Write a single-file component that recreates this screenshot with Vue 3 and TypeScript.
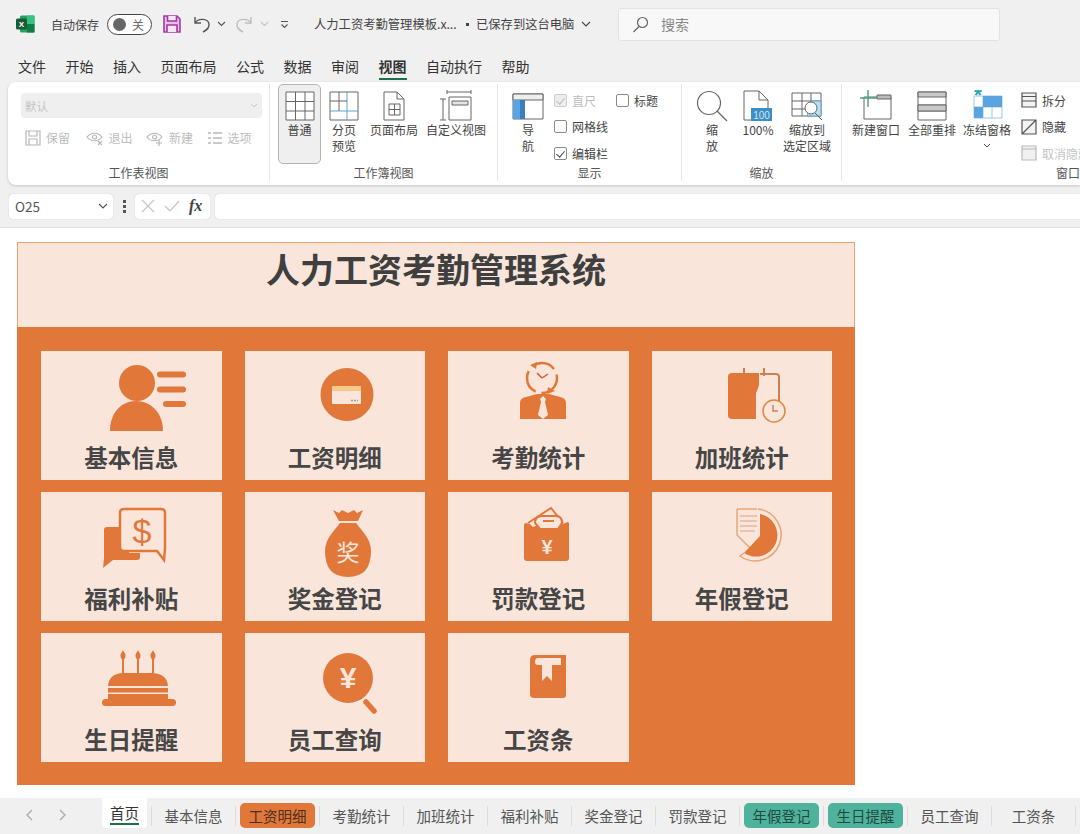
<script setup lang="ts">
const menus = ['文件', '开始', '插入', '页面布局', '公式', '数据', '审阅', '视图', '自动执行', '帮助']

const cards = [
  { name: '基本信息', icon: 'person' },
  { name: '工资明细', icon: 'card' },
  { name: '考勤统计', icon: 'clock' },
  { name: '加班统计', icon: 'calendar' },
  { name: '福利补贴', icon: 'chat' },
  { name: '奖金登记', icon: 'bag' },
  { name: '罚款登记', icon: 'wallet' },
  { name: '年假登记', icon: 'pie' },
  { name: '生日提醒', icon: 'cake' },
  { name: '员工查询', icon: 'search' },
  { name: '工资条', icon: 'book' },
]

const sheets = [
  { name: '基本信息' },
  { name: '工资明细', tone: 'orange' },
  { name: '考勤统计' },
  { name: '加班统计' },
  { name: '福利补贴' },
  { name: '奖金登记' },
  { name: '罚款登记' },
  { name: '年假登记', tone: 'green' },
  { name: '生日提醒', tone: 'green' },
  { name: '员工查询' },
  { name: '工资条' },
]
</script>

<template>
  <div class="app">
    <header class="titlebar">
      <svg class="logo" width="19" height="18" viewBox="0 0 19 18">
        <rect x="4" y="0.5" width="14.5" height="17" rx="1.5" fill="#21a366" />
        <rect x="11" y="0.5" width="7.5" height="8.5" fill="#33c481" />
        <rect x="11" y="9" width="7.5" height="8.5" fill="#107c41" />
        <rect x="0" y="3.5" width="11" height="11" rx="1.5" fill="#185c37" />
        <text x="5.5" y="12" class="logo-x">X</text>
      </svg>
      <span class="autosave">自动保存</span>
      <span class="toggle"><i></i>关</span>
      <svg class="save" width="18" height="18" viewBox="0 0 18 18" fill="none" stroke="#a33aa3" stroke-width="1.6">
        <path d="M1 1h13l3 3v13H1z" fill="#e6bfe6" />
        <path d="M4.500 1v5h9V1M4 17v-7h10v7" fill="#f4e6f4" />
      </svg>
      <svg class="undo" width="18" height="18" viewBox="0 0 18 18" fill="none" stroke="#555" stroke-width="1.4">
        <path d="M2 2v6h6M2 8c3-5 13-5 14 1 .5 3-2 6-6 8" />
      </svg>
      <svg class="chev" width="9" height="6" viewBox="0 0 9 6" fill="none" stroke="#555" stroke-width="1.2"><path d="M1 1l3.500 3.500L8 1" /></svg>
      <svg class="redo" width="18" height="18" viewBox="0 0 18 18" fill="none" stroke="#bdbdbd" stroke-width="1.4">
        <path d="M16 2v6h-6M16 8c-3-5-13-5-14 1-.5 3 2 6 6 8" />
      </svg>
      <svg class="chev2" width="9" height="6" viewBox="0 0 9 6" fill="none" stroke="#c4c4c4" stroke-width="1.2"><path d="M1 1l3.500 3.500L8 1" /></svg>
      <svg class="custom" width="9" height="9" viewBox="0 0 9 9" fill="none" stroke="#555" stroke-width="1.1"><path d="M1 1.500h7M1.500 4.500l3 3 3-3" /></svg>
      <span class="filename">人力工资考勤管理模板.x...</span>
      <span class="dot"></span>
      <span class="filename">已保存到这台电脑</span>
      <svg class="chev3" width="10" height="6" viewBox="0 0 10 6" fill="none" stroke="#444" stroke-width="1.1"><path d="M1 1l4 4 4-4" /></svg>
      <div class="searchbox">
        <svg width="17" height="17" viewBox="0 0 17 17" fill="none" stroke="#666" stroke-width="1.2">
          <circle cx="10.500" cy="6.500" r="5" /><path d="M7 10.500L1.500 16" />
        </svg>
        <span>搜索</span>
      </div>
    </header>

    <nav class="menubar">
      <span v-for="m in menus" :key="m" class="menu" :class="{ active: m === '视图' }">{{ m }}</span>
    </nav>

    <section class="ribbon">
      <div class="group g1">
        <div class="body">
          <div class="select"><span>默认</span>
            <svg width="8" height="5" viewBox="0 0 8 5" fill="none" stroke="#c8c8c8"><path d="M1 1l3 3 3-3" /></svg>
          </div>
          <div class="view-row">
            <span class="view-item">
              <svg width="16" height="16" viewBox="0 0 16 16" fill="none" stroke="#b8b8b8" stroke-width="1.2"><path d="M1 1h14v14H1zM4 1v5h8V1M4 15V9h8v6" /></svg>保留
            </span>
            <span class="view-item">
              <svg width="18" height="16" viewBox="0 0 18 16" fill="none" stroke="#b8b8b8" stroke-width="1.2"><path d="M1 7c4-5 11-5 15 0-4 5-11 5-15 0z" /><circle cx="8.500" cy="7" r="2" /><path d="M12 11l4 4M16 11l-4 4" /></svg>退出
            </span>
            <span class="view-item">
              <svg width="18" height="16" viewBox="0 0 18 16" fill="none" stroke="#b8b8b8" stroke-width="1.2"><path d="M1 7c4-5 11-5 15 0-4 5-11 5-15 0z" /><circle cx="8.500" cy="7" r="2" /><path d="M13 10v6M10 13h6" /></svg>新建
            </span>
            <span class="view-item">
              <svg width="16" height="16" viewBox="0 0 16 16" fill="none" stroke="#b8b8b8" stroke-width="1.4"><path d="M1 3h3M1 8h3M1 13h3M6 3h9M6 8h9M6 13h9" /></svg>选项
            </span>
          </div>
        </div>
        <div class="group-label">工作表视图</div>
      </div>

      <div class="group g2">
        <div class="body row">
          <div class="big selected w43">
            <svg width="32" height="32" viewBox="0 0 32 32" fill="#fff" stroke="#666"><path d="M2 2h28v28H2zM2 11.500h28M2 21h28M11.500 2v28M21 2v28" /></svg>
            <span>普通</span>
          </div>
          <div class="big w40">
            <svg width="32" height="32" viewBox="0 0 32 32" fill="#fff" stroke="#666"><path d="M2 2h28v28H2z" /><path d="M2 21h28M19 2v28" stroke="#5aa9c9" /><path d="M2 11h17M11 2v19" /></svg>
            <span>分页<br />预览</span>
          </div>
          <div class="big w60">
            <svg width="32" height="32" viewBox="0 0 32 32" fill="#fff" stroke="#666"><path d="M6 2h13l7 7v21H6zM19 2v7h7" /><path d="M11 14h11v11H11zM11 19.500h11M16.500 14v11" /></svg>
            <span>页面布局</span>
          </div>
          <div class="big w64">
            <svg width="34" height="32" viewBox="0 0 34 32" fill="#fff" stroke="#666"><path d="M8 2h24M8 0v4M32 0v4M1 9h6M1 30h6M4 9v21" fill="none" /><path d="M10 7h22v23H10z" /><path d="M13 11h16v4H13z" fill="#e4e4e4" /></svg>
            <span>自定义视图</span>
          </div>
        </div>
        <div class="group-label">工作簿视图</div>
      </div>

      <div class="group g3">
        <div class="body row">
          <div class="big w40">
            <svg width="32" height="32" viewBox="0 0 32 32" fill="#fff" stroke="#666"><path d="M1 4h30v25H1z" /><path d="M1 4h30v6H1z" fill="#eee" /><path d="M1 10h12v19H1z" fill="#5aa5e0" stroke="none" /><path d="M8 10h5v19H8z" fill="#3d7fbd" stroke="none" /></svg>
            <span>导<br />航</span>
          </div>
          <div class="checks">
            <label class="check disabled"><i class="box on"></i>直尺</label>
            <label class="check"><i class="box"></i>网格线</label>
            <label class="check"><i class="box on"></i>编辑栏</label>
          </div>
          <div class="checks second">
            <label class="check"><i class="box"></i>标题</label>
          </div>
        </div>
        <div class="group-label">显示</div>
      </div>

      <div class="group g4">
        <div class="body row">
          <div class="big w46">
            <svg width="32" height="32" viewBox="0 0 32 32" fill="none" stroke="#666" stroke-width="1.2"><circle cx="13" cy="13" r="11.500" /><path d="M21 21l10 10" /></svg>
            <span>缩<br />放</span>
          </div>
          <div class="big w46">
            <svg width="32" height="32" viewBox="0 0 32 32" fill="#fff" stroke="#666"><path d="M2 1h15l9 9v20H2zM17 1v9h9" /><rect x="9" y="18" width="21" height="13" fill="#3a8fc4" stroke="none" /><text x="19.500" y="28.500" class="hundred">100</text></svg>
            <span>100%</span>
          </div>
          <div class="big w52">
            <svg width="32" height="32" viewBox="0 0 32 32" fill="#fff" stroke="#666"><path d="M1 3h29v23H1zM1 11h29M1 19h15M11 3v23M20 3v8" /><path d="M20 11h10v15h-14z" fill="#bcdcf0" stroke="#5aa9c9" /><circle cx="20" cy="18" r="6" fill="#fff" /><path d="M24 23l7 7" /></svg>
            <span>缩放到<br />选定区域</span>
          </div>
        </div>
        <div class="group-label">缩放</div>
      </div>

      <div class="group g5">
        <div class="body row">
          <div class="big w56">
            <svg width="32" height="32" viewBox="0 0 32 32" fill="#fff" stroke="#666"><path d="M4 7h27v22H4z" /><path d="M17 5h14v4H17z" fill="#bbb" /><path d="M8 0v17M0 8h17" stroke="#4a9f7a" stroke-width="1.4" /></svg>
            <span>新建窗口</span>
          </div>
          <div class="big w56">
            <svg width="32" height="32" viewBox="0 0 32 32" fill="#fff" stroke="#666"><path d="M2 2h28v28H2zM2 15h28M2 21h28" /><path d="M2 2h28v5H2zM2 15h28v6H2z" fill="#c9c9c9" /></svg>
            <span>全部重排</span>
          </div>
          <div class="big w54">
            <svg width="32" height="32" viewBox="0 0 32 32" fill="#fff" stroke="#9cc8e8"><path d="M3 6h28v22H3zM3 17h28M12 6v22M21 6v22" /><path d="M3 6h9v11h19V6H12M3 17h9v11H3z" fill="#5aa5e0" stroke="none" /><text x="7" y="12" class="snow">*</text></svg>
            <span>冻结窗格</span>
            <svg class="down" width="8" height="5" viewBox="0 0 8 5" fill="none" stroke="#555"><path d="M1 1l3 3 3-3" /></svg>
          </div>
          <div class="side">
            <div class="side-item">
              <svg width="16" height="16" viewBox="0 0 16 16" fill="#f3f3f3" stroke="#555" stroke-width="1.2"><path d="M1 1h14v14H1zM1 4.500h14M1 9h14" /></svg>拆分
            </div>
            <div class="side-item">
              <svg width="16" height="16" viewBox="0 0 16 16" fill="#f3f3f3" stroke="#555" stroke-width="1.2"><path d="M1 1h14v14H1zM1 15L15 1" /></svg>隐藏
            </div>
            <div class="side-item off">
              <svg width="16" height="16" viewBox="0 0 16 16" fill="#f0f0f0" stroke="#bbb" stroke-width="1.2"><path d="M1 1h14v14H1zM1 4h14" /></svg>取消隐藏
            </div>
          </div>
        </div>
        <div class="group-label">窗口</div>
      </div>
    </section>

    <div class="formula">
      <div class="namebox">O25
        <svg width="10" height="6" viewBox="0 0 10 6" fill="none" stroke="#555" stroke-width="1.2"><path d="M1 1l4 4 4-4" /></svg>
      </div>
      <span class="more"><i></i><i></i><i></i></span>
      <div class="fxbox">
        <svg width="14" height="14" viewBox="0 0 14 14" fill="none" stroke="#c4c4c4" stroke-width="1.2"><path d="M1 1l12 12M13 1L1 13" /></svg>
        <svg width="16" height="14" viewBox="0 0 16 14" fill="none" stroke="#c4c4c4" stroke-width="1.2"><path d="M1 7l5 5L15 2" /></svg>
        <em>fx</em>
      </div>
      <div class="input"></div>
    </div>

    <main class="sheet">
      <div class="poster">
        <div class="poster-head">人力工资考勤管理系统</div>
        <div class="poster-body">
          <div v-for="c in cards" :key="c.name" class="card">
            <svg class="card-icon" width="180" height="90" viewBox="0 0 180 90">
              <g v-if="c.icon === 'person'" fill="#e2773a">
                <circle cx="96" cy="32" r="18" />
                <path d="M69 80c0-18 11-30 26-30s27 12 27 30z" />
                <rect x="116" y="20.500" width="29" height="6" rx="3" />
                <rect x="116" y="35.500" width="29" height="6" rx="3" />
                <rect x="122" y="50" width="23" height="6" rx="3" />
              </g>
              <g v-else-if="c.icon === 'card'">
                <circle cx="102" cy="43.500" r="26.500" fill="#e2773a" />
                <rect x="87" y="35" width="29" height="18" rx="1" fill="#f9e5da" />
                <rect x="87" y="35" width="29" height="5" fill="#f8c88a" />
                <path d="M106 49.500h7" stroke="#999" stroke-width="1.500" stroke-dasharray="2 1" />
              </g>
              <g v-else-if="c.icon === 'clock'">
                <circle cx="94" cy="27" r="15" fill="none" stroke="#e2773a" stroke-width="2.500" stroke-dasharray="24 6" />
                <path d="M82 14l7-3-1 7zM107 40l-8 3 1-7z" fill="#e2773a" />
                <path d="M94 27l-5-5M94 27l6-4" stroke="#d85a3a" stroke-width="1.500" fill="none" />
                <path d="M72 52q0-5 6-6l11-3h12l11 3q6 1 6 6v16H72z" fill="#e2773a" />
                <path d="M95 45l3 3-1 3 3 13-5 4-5-4 3-13-1-3z" fill="#f9e5da" />
              </g>
              <g v-else-if="c.icon === 'calendar'">
                <path d="M80 22h27v12l-2 6-1 2v26H80q-4 0-4-4V26q0-4 4-4z" fill="#e2773a" />
                <path d="M108 23h16q3 0 3 3v25" fill="none" stroke="#d08050" stroke-width="2" />
                <path d="M92 17v8M112 17v8" stroke="#d08050" stroke-width="2" />
                <circle cx="122" cy="60" r="11" fill="#f9e5da" stroke="#e2883f" stroke-width="1.500" />
                <path d="M121 54v6h5" fill="none" stroke="#c98050" stroke-width="1.400" />
              </g>
              <g v-else-if="c.icon === 'chat'">
                <path d="M66 35h22v26h11v4q0 3-3 3H72l-10 8 1-10V38q0-3 3-3z" fill="#e2773a" />
                <path d="M83 17h37q4 0 4 4v36l-1 11-7-9H83q-4 0-4-4V21q0-4 4-4z" fill="#f9e5da" stroke="#e2773a" stroke-width="2.500" />
                <text x="101" y="51" class="dollar">$</text>
              </g>
              <g v-else-if="c.icon === 'bag'">
                <path d="M88 18l6 3 3-3 6 3 6-3 3 3 6-3-5 11H94z" fill="#e2773a" />
                <path d="M95 31h16q4 5 8 10 7 9 7 18 0 26-23 26T80 59q0-9 7-18 4-5 8-10z" fill="#e2773a" />
                <text x="103" y="69" class="jiang">奖</text>
              </g>
              <g v-else-if="c.icon === 'wallet'">
                <path d="M78 31l4 1 3 3 10-4 2 3h12l11-4 1 1v35q0 3-3 3H79q-3 0-3-3V34q0-3 2-3z" fill="#e2773a" />
                <path d="M80 31l23-15 12 15" fill="#f9e5da" stroke="#e2773a" stroke-width="2" />
                <path d="M87 31q0-7 7-7h14q6 0 6 7l-4 6H92z" fill="#f9e5da" stroke="#e2773a" stroke-width="2" />
                <path d="M95 29h11" stroke="#e2773a" stroke-width="2" />
                <text x="99" y="62" class="yen">¥</text>
              </g>
              <g v-else-if="c.icon === 'pie'">
                <path d="M85 17h21v26L90 60 85 52z" fill="#f9e5da" />
                <path d="M106 17a26 26 0 1 1-18 47l4-3" fill="none" stroke="#e9a678" stroke-width="1.500" />
                <path d="M85 17h20M85 17v26l13 13" fill="none" stroke="#e9a678" stroke-width="1.500" />
                <path d="M88 24h17M88 29h17M88 34h17M88 39h15" stroke="#dba283" stroke-width="1" />
                <path d="M108 22a21.500 21.500 0 1 1-16 39l16-17z" fill="#e2773a" />
              </g>
              <g v-else-if="c.icon === 'cake'" fill="#e2773a">
                <path d="M82 26q-3-3 0-7 3 4 0 7zM97 26q-3-3 0-7 3 4 0 7zM112 26q-3-3 0-7 3 4 0 7z" stroke="#e2773a" stroke-width="2" />
                <rect x="81" y="26" width="2" height="15" /><rect x="96" y="26" width="2" height="15" /><rect x="111" y="26" width="2" height="15" />
                <path d="M67 53q1-12 14-13h31q14 1 15 13z" />
                <rect x="67" y="55" width="60" height="4.500" />
                <rect x="67" y="61" width="60" height="5" />
                <rect x="61" y="66" width="74" height="7" rx="3.500" />
              </g>
              <g v-else-if="c.icon === 'search'">
                <circle cx="103" cy="45" r="25" fill="#e2773a" />
                <path d="M121 69l8 9" stroke="#e2773a" stroke-width="5.500" stroke-linecap="round" />
                <text x="103" y="55" class="yen2">¥</text>
              </g>
              <g v-else-if="c.icon === 'book'">
                <path d="M87 22h31v3H90q-3 0-3 4 0 3 3 3h4v16l5-5 5 5V32h9v-7h5v37q0 3-3 3H86q-4 0-4-4V27q0-5 5-5z" fill="#e2773a" />
              </g>
            </svg>
            <span class="card-name">{{ c.name }}</span>
          </div>
        </div>
      </div>
    </main>

    <footer class="tabsbar">
      <div class="arrows">
        <svg width="8" height="12" viewBox="0 0 8 12" fill="none" stroke="#aaa" stroke-width="1.300"><path d="M7 1L2 6l5 5" /></svg>
        <svg width="8" height="12" viewBox="0 0 8 12" fill="none" stroke="#aaa" stroke-width="1.300"><path d="M1 1l5 5-5 5" /></svg>
      </div>
      <div class="sheet-wrap">
        <span class="home"><b>首页</b></span>
      </div>
      <div v-for="s in sheets" :key="s.name" class="sheet-wrap">
        <span class="tab" :class="s.tone">{{ s.name }}</span>
      </div>
    </footer>
  </div>
</template>

<style>
html, body {
  margin: 0;
  background: #f0f0f0;
}
</style>

<style scoped>
.app {
  width: 1080px;
  height: 834px;
  overflow: hidden;
  display: flex;
  flex-direction: column;
  background: #f0f0f0;
  color: #444;
  font-family: "Noto Sans CJK SC", "Liberation Sans", sans-serif;
}

.titlebar {
  height: 50px;
  flex: none;
  display: flex;
  align-items: center;
  padding-left: 16px;
  font-size: 12px;
  box-sizing: border-box;
  padding-bottom: 2px;
}
.logo { margin-right: 16px; }
.logo-x {
  fill: #fff;
  font-size: 8px;
  font-weight: 700;
  text-anchor: middle;
  font-family: "Liberation Sans", sans-serif;
}
.autosave { width: 56px; font-size: 12px; color: #444; }
.toggle {
  width: 45px;
  height: 21px;
  box-sizing: border-box;
  border: 1px solid #444;
  border-radius: 11px;
  background: #fff;
  display: flex;
  align-items: center;
  justify-content: space-between;
  padding: 0 7px 0 5px;
  font-size: 12px;
  color: #666;
}
.toggle i {
  width: 13px;
  height: 13px;
  border-radius: 50%;
  background: #666;
}
.save { margin-left: 11px; }
.undo { margin-left: 12px; }
.chev { margin-left: 6px; }
.redo { margin-left: 9px; }
.chev2 { margin-left: 7px; }
.custom { margin-left: 11px; }
.filename { font-size: 12.300px; color: #444; white-space: nowrap; margin-left: 25px; width: 144px; }
.filename + .dot + .filename { margin-left: 7px; width: 98px; }
.dot {
  width: 3px;
  height: 3px;
  margin-left: 8px;
  background: #444;
}
.chev3 { margin-left: 7px; }
.searchbox {
  margin-left: 27px;
  width: 382px;
  height: 33px;
  box-sizing: border-box;
  background: #f8f8f8;
  border: 1px solid #e2e2e2;
  border-radius: 3px;
  display: flex;
  align-items: center;
  padding-left: 13px;
  gap: 12px;
  font-size: 14px;
  color: #888;
}

.menubar {
  height: 32px;
  flex: none;
  display: flex;
  gap: 19.500px;
  padding-left: 18px;
  font-size: 14px;
  color: #333;
}
.menu {
  height: 30px;
  line-height: 32px;
  border-bottom: 2px solid transparent;
  box-sizing: border-box;
}
.menu.active {
  font-weight: 700;
  border-bottom-color: #1e6e4a;
}

.ribbon {
  height: 103px;
  flex: none;
  margin-left: 8px;
  padding: 2px 0 4px;
  box-sizing: border-box;
  background: #fff;
  border-radius: 8px 0 0 8px;
  box-shadow: 0 1px 3px rgba(0, 0, 0, 0.18);
  display: flex;
  font-size: 12px;
}
.group {
  flex: none;
  box-sizing: border-box;
  border-right: 1px solid #e6e6e6;
  height: 97px;
}
.group .body { height: 80px; }
.group .row { display: flex; }
.group-label {
  margin-top: 1px;
  height: 16px;
  line-height: 16px;
  text-align: center;
  font-size: 12px;
  color: #555;
}
.g1 { width: 262px; }
.g1 .body { padding: 9px 0 0 13px; box-sizing: border-box; }
.g2 { width: 228px; }
.g2 .row { padding-left: 8px; }
.g3 { width: 184px; }
.g3 .row { padding-left: 10px; }
.g4 { width: 160px; }
.g4 .row { padding-left: 7px; }
.g5 { width: 452px; border-right: none; }
.g5 .row { padding-left: 6px; }

.select {
  width: 241px;
  height: 25px;
  box-sizing: border-box;
  background: #efefef;
  border-radius: 4px;
  display: flex;
  align-items: center;
  justify-content: space-between;
  padding: 0 4px;
  font-size: 11.500px;
  color: #c4c4c4;
}
.view-row {
  display: grid;
  grid-template-columns: repeat(4, 60.500px);
  padding-left: 4px;
  margin-top: 11px;
}
.view-item {
  display: flex;
  align-items: center;
  gap: 5px;
  font-size: 12px;
  color: #bcbcbc;
}

.big {
  height: 80px;
  box-sizing: border-box;
  padding-top: 6px;
  display: flex;
  flex-direction: column;
  align-items: center;
  text-align: center;
  line-height: 16px;
  color: #444;
  white-space: nowrap;
  flex: none;
}
.big svg { flex: none; }
.big svg + span { height: 32px; }
.big .down { margin-top: -11px; }
.big.selected {
  background: #efefef;
  border: 1px solid #b4b4b4;
  border-radius: 5px;
  padding-top: 5px;
}
.w40 { width: 40px; }
.w43 { width: 43px; margin-right: 3px; }
.w46 { width: 46px; }
.w52 { width: 52px; }
.w54 { width: 54px; }
.w56 { width: 56px; }
.w60 { width: 60px; }
.w64 { width: 64px; }

.checks {
  display: flex;
  flex-direction: column;
  gap: 6.500px;
  padding: 6px 0 0 6px;
}
.checks.second { padding-left: 8px; }
.check {
  display: flex;
  align-items: center;
  gap: 5px;
  height: 20px;
  font-size: 12px;
  color: #444;
  white-space: nowrap;
}
.check.disabled { color: #bcbcbc; }
.box {
  width: 13px;
  height: 13px;
  box-sizing: border-box;
  border: 1px solid #8a8a8a;
  border-radius: 2px;
  background: #fff;
  position: relative;
}
.box.on::after {
  content: "";
  position: absolute;
  left: 3px;
  top: 1px;
  width: 4px;
  height: 7px;
  border: solid #444;
  border-width: 0 1.300px 1.300px 0;
  transform: rotate(40deg);
}
.disabled .box { border-color: #ccc; background: #eee; }
.disabled .box.on::after { border-color: #bbb; }

.hundred {
  fill: #cfe6f5;
  stroke: none;
  font-size: 10px;
  text-anchor: middle;
  font-family: "Liberation Sans", sans-serif;
}
.snow {
  fill: #2ba6a6;
  stroke: none;
  font-size: 20px;
  font-weight: 700;
  text-anchor: middle;
  font-family: "Liberation Sans", sans-serif;
}

.side {
  display: flex;
  flex-direction: column;
  gap: 6.500px;
  padding: 6px 0 0 7px;
}
.side-item {
  display: flex;
  align-items: center;
  gap: 5px;
  height: 20px;
  font-size: 12px;
  white-space: nowrap;
}
.side-item.off { color: #c4c4c4; }

.formula {
  height: 26px;
  flex: none;
  margin-top: 8px;
  display: flex;
  align-items: center;
  padding-left: 9px;
}
.namebox {
  width: 104px;
  height: 25px;
  box-sizing: border-box;
  background: #fff;
  border-radius: 4px;
  box-shadow: 0 0 1px rgba(0, 0, 0, 0.25);
  display: flex;
  align-items: center;
  justify-content: space-between;
  padding: 0 5px 0 6px;
  font-size: 13.500px;
  color: #555;
}
.more {
  width: 22px;
  display: flex;
  flex-direction: column;
  align-items: center;
  gap: 2px;
}
.more i { width: 3px; height: 3px; background: #555; }
.fxbox {
  width: 75px;
  height: 25px;
  box-sizing: border-box;
  background: #fff;
  border-radius: 4px;
  box-shadow: 0 0 1px rgba(0, 0, 0, 0.25);
  display: flex;
  align-items: center;
  gap: 9px;
  padding-left: 6px;
}
.fxbox em {
  font: italic 700 16px "Liberation Serif", serif;
  color: #444;
}
.input {
  flex: 1;
  margin-left: 5px;
  height: 25px;
  background: #fff;
  border-radius: 4px 0 0 4px;
  box-shadow: 0 0 1px rgba(0, 0, 0, 0.25);
}

.sheet {
  height: 571px;
  flex: none;
  margin-top: 8px;
  background: #fff;
  border-top: 1px solid #e2e2e2;
  box-sizing: border-box;
  padding: 14px 0 0 17px;
}
.poster { width: 838px; }
.poster-head {
  height: 85px;
  box-sizing: border-box;
  background: #f9e5da;
  border: 1px solid #e6a273;
  border-bottom: none;
  text-align: center;
  font-size: 34px;
  font-weight: 700;
  line-height: 52px;
  color: #3f3f3f;
}
.poster-body {
  height: 458px;
  box-sizing: border-box;
  background: #e2773a;
  padding: 24px 24px 0;
  display: grid;
  grid-template-columns: repeat(4, 180.500px);
  grid-auto-rows: 129px;
  gap: 12px 23px;
}
.card {
  background: #f9e5da;
  display: flex;
  flex-direction: column;
  align-items: center;
}
.card-icon { flex: none; }
.card-name {
  margin-top: 1px;
  font-size: 23.500px;
  font-weight: 700;
  line-height: 30px;
  color: #464646;
}
.dollar {
  fill: #e2773a;
  font-size: 34px;
  text-anchor: middle;
  font-family: "Liberation Sans", sans-serif;
}
.jiang {
  fill: #f9e5da;
  font-size: 23px;
  text-anchor: middle;
}
.yen {
  fill: #f9e5da;
  font-size: 20px;
  font-weight: 700;
  text-anchor: middle;
  font-family: "Liberation Sans", sans-serif;
}
.yen2 {
  fill: #f9e5da;
  font-size: 30px;
  font-weight: 700;
  text-anchor: middle;
  font-family: "Liberation Sans", sans-serif;
}

.tabsbar {
  flex: 1;
  display: flex;
  align-items: flex-start;
  font-size: 14.500px;
  color: #555;
}
.arrows {
  width: 118px;
  box-sizing: border-box;
  padding: 11px 0 0 25px;
  display: flex;
  gap: 26px;
}
.sheet-wrap {
  height: 20px;
  margin-top: 8px;
  padding-right: 4px;
  margin-right: 4px;
  border-right: 1px solid #dcdcdc;
  flex: none;
  display: flex;
}
.sheet-wrap .home {
  width: 45px;
  height: 30px;
  margin-top: -8px;
  background: #fff;
  border-radius: 0 0 4px 4px;
  display: flex;
  justify-content: center;
  color: #333;
}
.home b {
  font-weight: 400;
  height: 25px;
  line-height: 30px;
  border-bottom: 2px solid #1e6e4a;
}
.tab {
  width: 75px;
  height: 25px;
  margin-top: -3px;
  border-radius: 5px;
  text-align: center;
  line-height: 25px;
  white-space: nowrap;
}
.tab.orange { background: #e2773a; color: #4a3020; }
.tab.green { background: #4fb39b; color: #1f4a40; }
</style>
